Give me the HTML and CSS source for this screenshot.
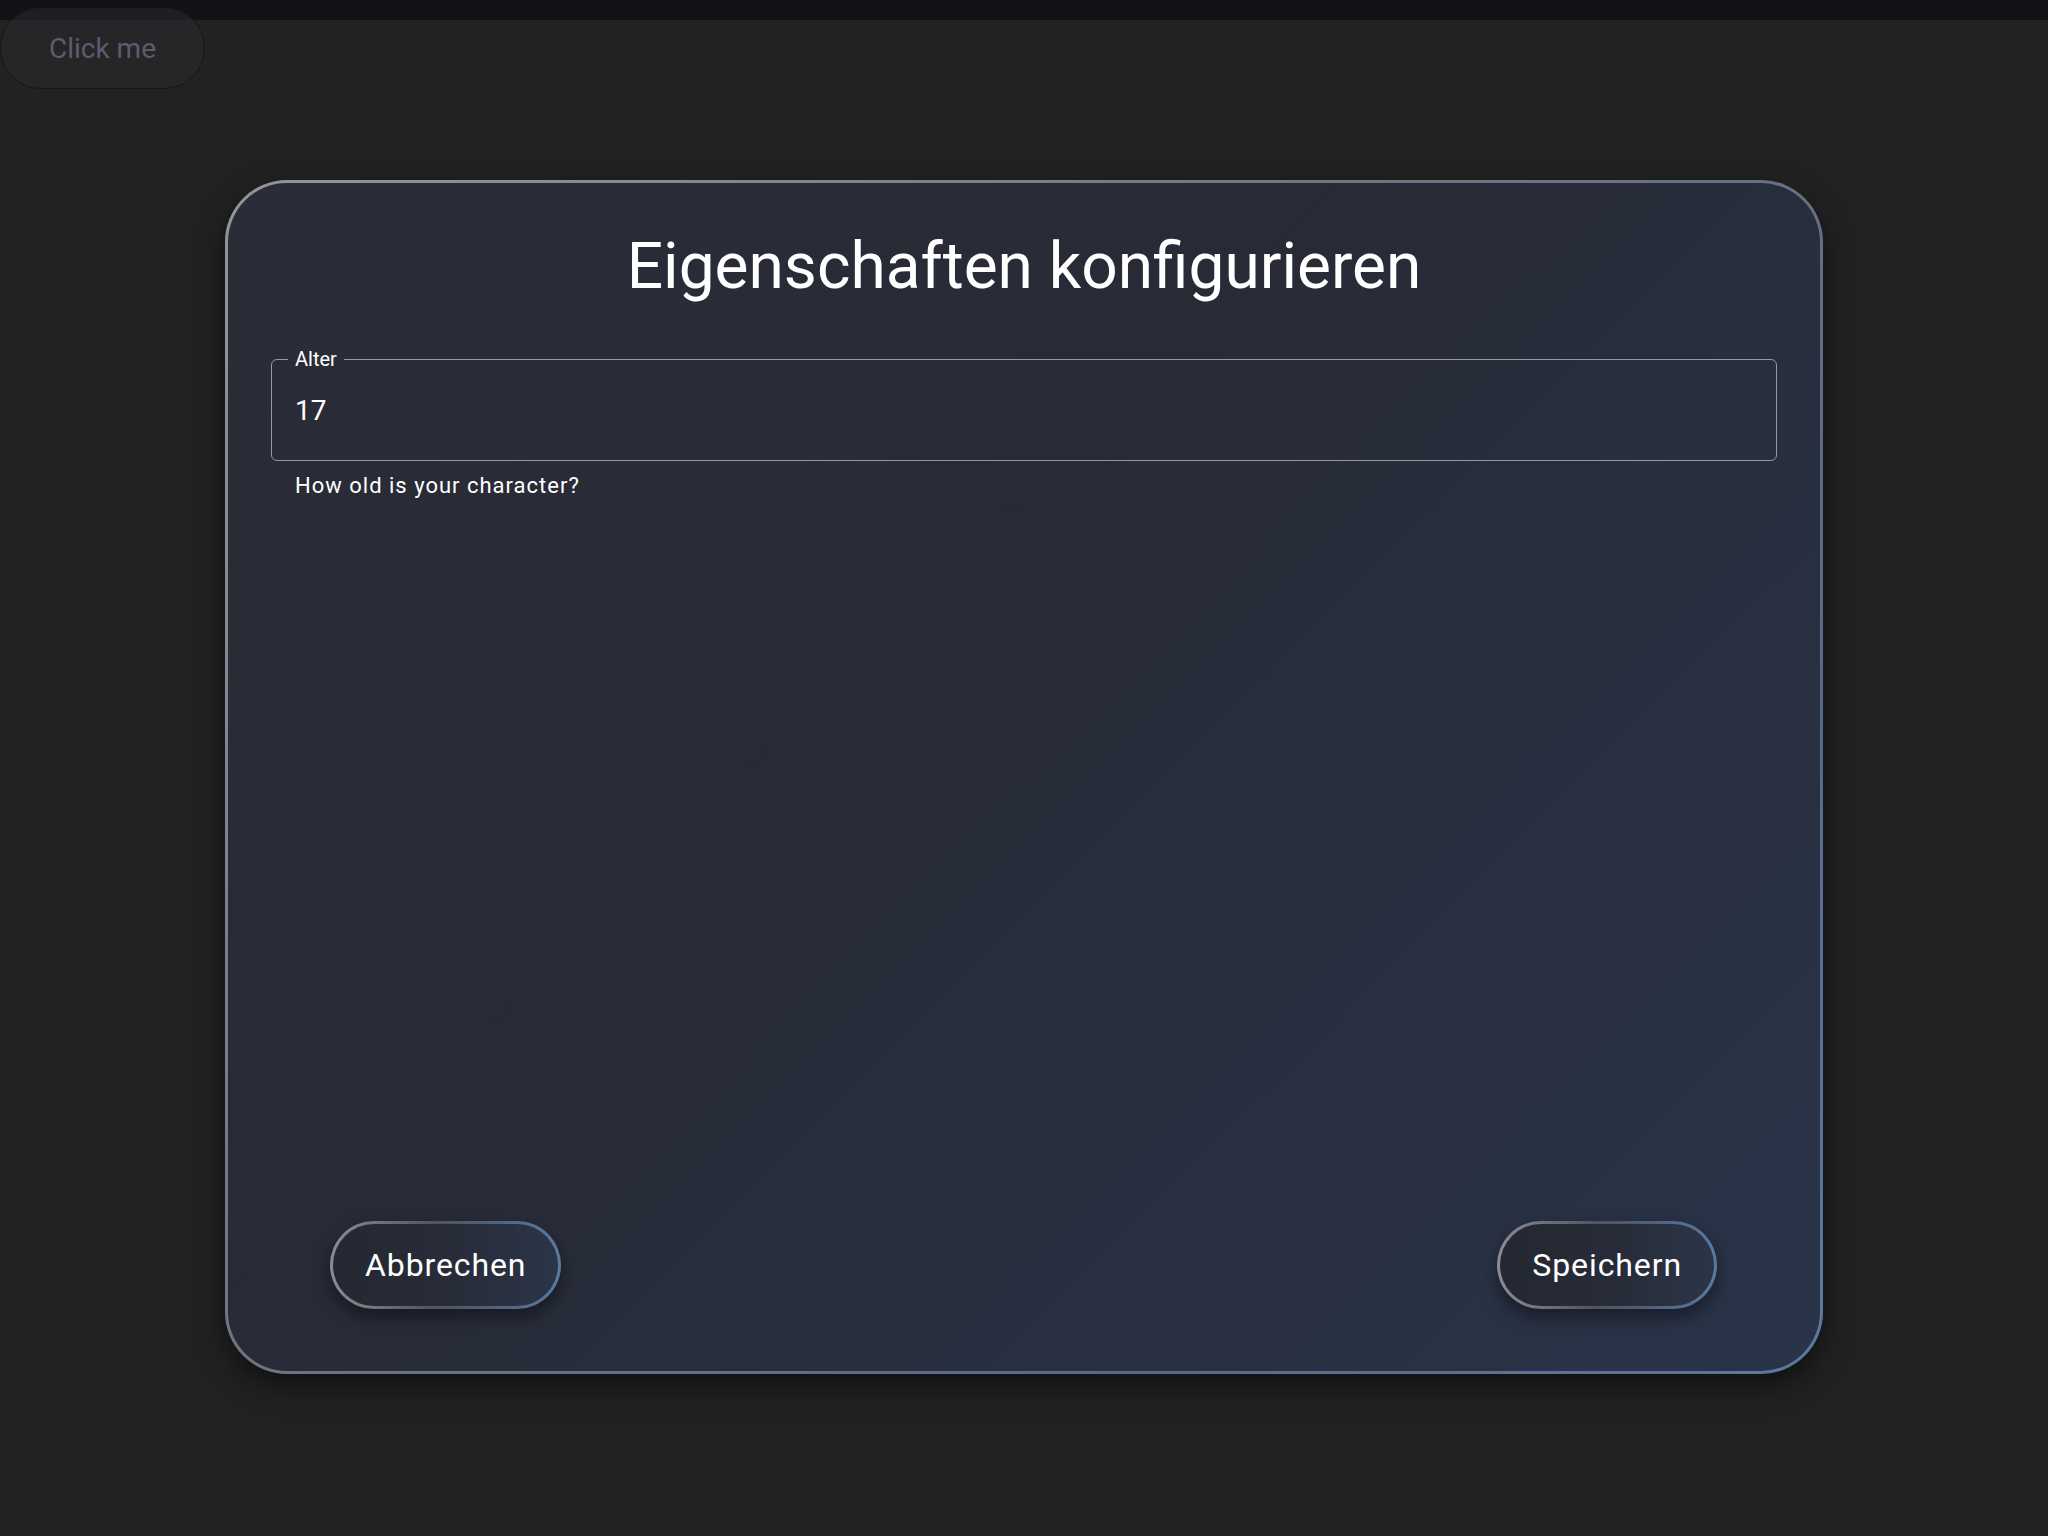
FILE: index.html
```html
<!DOCTYPE html>
<html lang="de">
<head>
<meta charset="utf-8">
<title>Eigenschaften konfigurieren</title>
<link rel="stylesheet" href="styles.css">
</head>
<body>
<div class="topbar"></div>
<button class="click-btn">Click me</button>
<main class="stage">
  <section class="dialog">
    <h1 class="dialog-title">Eigenschaften konfigurieren</h1>
    <div class="field">
      <span class="field-value">17</span>
      <fieldset class="outline"><legend>Alter</legend></fieldset>
    </div>
    <p class="helper">How old is your character?</p>
    <div class="actions">
      <button class="pill">Abbrechen</button>
      <button class="pill">Speichern</button>
    </div>
  </section>
</main>
</body>
</html>
```

FILE: styles.css
```css
html, body {
  margin: 0;
  padding: 0;
}
body {
  background: #222222;
  font-family: Roboto, "Liberation Sans", sans-serif;
  min-height: 1536px;
  position: relative;
}
.topbar {
  height: 20px;
  background: #121117;
}
.click-btn {
  position: absolute;
  top: 7px;
  left: 0;
  width: 205px;
  height: 82px;
  border-radius: 41px;
  border: 1px solid #161616;
  background: rgba(42, 42, 45, 0.55);
  color: #5f5a6e;
  font-family: Roboto, "Liberation Sans", sans-serif;
  font-size: 28px;
  padding: 0;
}
.stage {
  padding-top: 160px;
}
.dialog {
  box-sizing: border-box;
  width: 1598px;
  height: 1194px;
  margin: 0 auto;
  border: 3px solid transparent;
  border-radius: 62px;
  background:
    linear-gradient(135deg, #2a2d38 0%, #282b36 40%, #282f40 70%, #2a3449 100%) padding-box,
    linear-gradient(135deg, #92959b 0%, #70767f 40%, #58698a 75%, #5c799d 100%) border-box;
  box-shadow: 0 12px 32px rgba(0, 0, 0, 0.55);
  padding: 46px 43px 62px;
  display: flex;
  flex-direction: column;
  color: #ffffff;
}
.dialog-title {
  margin: 0;
  font-size: 64px;
  font-weight: 400;
  line-height: 75px;
  text-align: center;
}
.field {
  position: relative;
  margin-top: 55px;
  height: 102px;
  display: flex;
  align-items: center;
  padding: 0 24px;
}
.field-value {
  font-size: 28px;
  line-height: 33px;
  color: #ffffff;
}
.outline {
  position: absolute;
  top: -11px;
  left: 0;
  right: 0;
  bottom: 0;
  margin: 0;
  padding: 0 16px;
  border: 1px solid #9a97a5;
  border-radius: 6px;
  pointer-events: none;
}
.outline legend {
  padding: 0 7px;
  font-size: 20px;
  line-height: 22px;
  color: #ffffff;
}
.helper {
  margin: 12px 0 0 24px;
  font-size: 22px;
  line-height: 26px;
  letter-spacing: 1px;
  color: #ffffff;
}
.actions {
  margin-top: auto;
  display: flex;
  justify-content: space-between;
  padding: 0 60px 0 59px;
}
.pill {
  height: 88px;
  padding: 0 32px;
  border: 3px solid transparent;
  border-radius: 44px;
  background:
    linear-gradient(90deg, #252832 0%, #272c38 55%, #2b3549 100%) padding-box,
    linear-gradient(90deg, #8a8d93 0%, #50545e 45%, #4e617d 70%, #5b7aa0 100%) border-box;
  box-shadow: 0 8px 18px rgba(0, 0, 0, 0.45);
  color: #ffffff;
  font-family: Roboto, "Liberation Sans", sans-serif;
  font-size: 32px;
  letter-spacing: 0.9px;
}
```
